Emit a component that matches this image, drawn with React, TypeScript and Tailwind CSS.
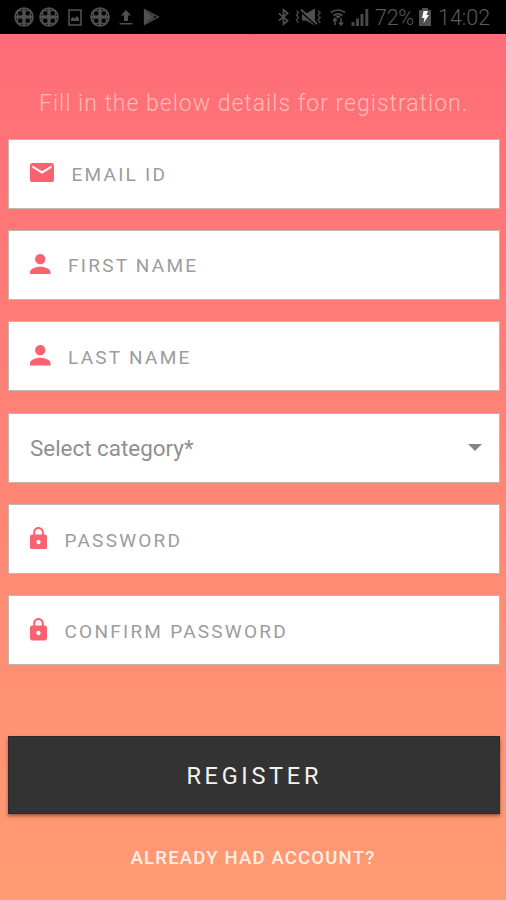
import React from "react";

const MAIL =
  "M20 4H4c-1.1 0-1.99.9-1.99 2L2 18c0 1.1.9 2 2 2h16c1.1 0 2-.9 2-2V6c0-1.1-.9-2-2-2zm0 4l-8 5-8-5V6l8 5 8-5v2z";
const PERSON =
  "M12 12c2.21 0 4-1.79 4-4s-1.79-4-4-4-4 1.79-4 4 1.79 4 4 4zm0 2c-2.67 0-8 1.34-8 4v2h16v-2c0-2.66-5.33-4-8-4z";
const LOCK =
  "M18 8h-1V6c0-2.76-2.24-5-5-5S7 3.24 7 6v2H6c-1.1 0-2 .9-2 2v10c0 1.1.9 2 2 2h12c1.1 0 2-.9 2-2V10c0-1.1-.9-2-2-2zm-6 9c-1.1 0-2-.9-2-2s.9-2 2-2 2 .9 2 2-.9 2-2 2zm3.1-9H8.9V6c0-1.71 1.39-3.1 3.1-3.1 1.71 0 3.1 1.39 3.1 3.1v2z";

type FieldProps = {
  label: string;
  path: string;
  viewBox: string;
  iconClass: string;
};

const fields: FieldProps[] = [
  { label: "EMAIL ID", path: MAIL, viewBox: "2 4 20 16", iconClass: "h-[19px] w-6" },
  { label: "FIRST NAME", path: PERSON, viewBox: "4 4 16 16", iconClass: "h-[20.5px] w-[20.5px]" },
  { label: "LAST NAME", path: PERSON, viewBox: "4 4 16 16", iconClass: "h-[20.5px] w-[20.5px]" },
];

const passwords: FieldProps[] = [
  { label: "PASSWORD", path: LOCK, viewBox: "4 1 16 21", iconClass: "h-[22.5px] w-[17px]" },
  { label: "CONFIRM PASSWORD", path: LOCK, viewBox: "4 1 16 21", iconClass: "h-[22.5px] w-[17px]" },
];

function Box({ children }: { children: React.ReactNode }) {
  return (
    <div className="flex h-[70px] shrink-0 items-center border border-[#c4b5b3] bg-white pl-[21px] pr-[17px]">
      {children}
    </div>
  );
}

function Field({ label, path, viewBox, iconClass }: FieldProps) {
  return (
    <Box>
      <svg viewBox={viewBox} preserveAspectRatio="none" className={`mb-[2px] shrink-0 fill-[#fb6270] ${iconClass}`}>
        <path d={path} />
      </svg>
      <span className="ml-[17.5px] whitespace-nowrap pt-[3px] text-[19px] leading-6 tracking-[2.25px] text-[#9c9c9c]">
        {label}
      </span>
    </Box>
  );
}

function Reel({ className }: { className: string }) {
  return (
    <svg viewBox="0 0 20 20" className={`h-5 w-5 ${className}`}>
      <circle cx="10" cy="10" r="8.9" fill="none" stroke="#505050" strokeWidth="1.8" />
      <path d="M10 2v16M2 10h16" stroke="#505050" strokeWidth="2.4" />
      <g fill="none" stroke="#505050" strokeWidth="1.3">
        <circle cx="6.3" cy="6.3" r="3" />
        <circle cx="13.7" cy="6.3" r="3" />
        <circle cx="6.3" cy="13.7" r="3" />
        <circle cx="13.7" cy="13.7" r="3" />
      </g>
    </svg>
  );
}

function StatusBar() {
  return (
    <div className="flex h-[34px] shrink-0 items-center bg-black pl-[14px] text-[#505050]">
      <Reel className="" />
      <Reel className="ml-[5px]" />
      <svg viewBox="0 0 14 17" className="ml-[9px] h-[17px] w-[14px]">
        <rect x="1" y="1" width="12" height="15" fill="none" stroke="#505050" strokeWidth="1.6" />
        <path d="M3 12V9.5l2-1.5 1.5 1.5L9 7l2 2.5V12z" fill="#505050" />
      </svg>
      <Reel className="ml-[8px]" />
      <svg viewBox="0 0 14 16" className="ml-[9px] h-4 w-[14px]">
        <path d="M7 1L1.8 6.5H5V12h4V6.5h3.2zM.5 14h13v1.5H.5z" fill="#505050" />
      </svg>
      <svg viewBox="0 0 17 18" className="ml-[10px] h-[18px] w-[17px]">
        <path d="M1.500 1.500L15.500 9l-14 7.500z" fill="#3c3c3c" stroke="#484848" strokeWidth="1.300" />
        <path d="M1 1l8 8-8 8z" fill="#505050" />
        <path d="M11.500 9h1.500" stroke="#000" strokeWidth="2" />
      </svg>
      <svg viewBox="0 0 14 18" className="ml-[117px] h-[18px] w-[13px]">
        <path d="M2 5l9.5 8L7 16.7V1.3L11.500 5 2 13" fill="none" stroke="#505050" strokeWidth="1.8" />
      </svg>
      <svg viewBox="0 0 28 18" className="ml-[5px] h-[18px] w-7">
        <path d="M7 5.500h4l9-5v17l-9-5H7z" fill="#505050" />
        <path d="M5.500 3.500l16 14" stroke="#000" strokeWidth="1.600" />
        <path d="M6 1.500l16 14.500" stroke="#505050" strokeWidth="1.800" />
        <path d="M1.500 2.500l2 2-2 2.500 2 2.500-2 2.500 2 3M23 2.500l2.200 2-2.200 2.500 2.200 2.500-2.200 2.500 2.200 3" fill="none" stroke="#484848" strokeWidth="1.300" />
      </svg>
      <svg viewBox="0 0 16 18" className="ml-[7px] h-[18px] w-4">
        <path d="M1 4.500q7-5 14 0M3.500 7.500q4.500-3.500 9 0" fill="none" stroke="#505050" strokeWidth="1.700" />
        <path d="M8 11L5 7.500h6z" fill="#505050" />
        <path d="M5 17v-6M3 13l2-2.500L7 13M11 10v6M9 14.500l2 2.500 2-2.500" fill="none" stroke="#505050" strokeWidth="1.500" />
      </svg>
      <svg viewBox="0 0 18 18" className="ml-[5px] h-[18px] w-[18px]">
        <path d="M.5 14h3v4h-3zM5 10.500h3V18H5zM9.500 6h3v12h-3zM14.300 1h3v17h-3z" fill="#484848" />
      </svg>
      <span className="ml-[6px] w-[39px] whitespace-nowrap pt-px text-[21.500px] font-light leading-6 tracking-[-0.300px] text-[#5c5c5c]">72%</span>
      <svg viewBox="0 0 12 18" className="ml-[5px] h-[18px] w-3">
        <path d="M0 2h3V0h6v2h3v16H0z" fill="#505050" />
        <path d="M4.500 3H9L7.500 7H10l-5.500 8 1-5H3z" fill="#fff" />
      </svg>
      <span className="ml-[7px] whitespace-nowrap pt-px text-[21.500px] font-light leading-6 text-[#5c5c5c]">14:02</span>
    </div>
  );
}

export default function App() {
  return (
    <main className="flex h-[900px] w-[506px] flex-col overflow-hidden bg-linear-to-b from-[#ff6a78] to-[#ff9b72] font-['Roboto',sans-serif]">
      <StatusBar />
      <p className="mt-[54.500px] h-[30px] shrink-0 whitespace-nowrap pl-[39px] text-[23px] font-light leading-[30px] tracking-[1px] text-[#ffbcb4]">
        Fill in the below details for registration.
      </p>
      <form className="mt-[20px] flex shrink-0 flex-col pl-2 pr-[6.500px]">
        <div className="flex flex-col gap-[21.400px]">
          {fields.map((f) => (
            <Field key={f.label} {...f} />
          ))}
          <Box>
            <span className="flex-1 text-[22.400px] leading-7 text-[#8f8f8f]">Select category*</span>
            <svg viewBox="0 0 14 7" className="mb-px h-[7px] w-[14px] fill-[#858585]">
              <path d="M0 0h14L7 7z" />
            </svg>
          </Box>
          {passwords.map((f) => (
            <Field key={f.label} {...f} />
          ))}
        </div>
        <button
          type="button"
          className="mt-[71px] h-[78px] border border-[#262c2d] bg-[#333] pl-[1px] pt-[2px] text-[23.500px] leading-7 tracking-[3.700px] text-[#f2f2f2] shadow-[0_2px_3px_rgba(60,30,20,0.500)]"
        >
          REGISTER
        </button>
      </form>
      <a className="mt-[31.500px] text-center text-[18.500px] font-medium leading-6 tracking-[1.200px] text-[#ffeee8]">
        ALREADY HAD ACCOUNT?
      </a>
    </main>
  );
}
